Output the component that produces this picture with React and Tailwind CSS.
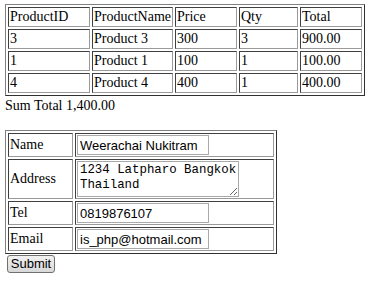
const items = [
  { id: "3", name: "Product 3", price: "300", qty: "3", total: "900.00" },
  { id: "1", name: "Product 1", price: "100", qty: "1", total: "100.00" },
  { id: "4", name: "Product 4", price: "400", qty: "1", total: "400.00" },
];

// classic border="1" look: outset table, inset cells
const table =
  "border-separate border-spacing-[2px] border border-t-[#808080] border-l-[#808080] border-r-[#303030] border-b-[#303030]";
const cell =
  "p-px text-left font-normal align-middle border border-t-[#404040] border-l-[#404040] border-r-[#9a9a9a] border-b-[#9a9a9a]";
const input =
  "block h-[20px] border border-[#a9a9a9] bg-white px-[2px] text-[13px] text-black outline-none font-['Liberation_Sans',Arial,sans-serif]";

export default function App() {
  return (
    <div className="min-h-screen bg-white pl-[5px] pt-[4px] text-[14px] leading-[16px] text-black font-['Liberation_Serif','Times_New_Roman',serif]">
      <table className={`${table} w-[360px]`}>
        <thead>
          <tr>
            <th className={`${cell} h-[20px] w-[82px]`}>ProductID</th>
            <th className={`${cell} h-[20px] w-[80px]`}>ProductName</th>
            <th className={`${cell} h-[20px] w-[62px]`}>Price</th>
            <th className={`${cell} h-[20px] w-[59px]`}>Qty</th>
            <th className={`${cell} h-[20px]`}>Total</th>
          </tr>
        </thead>
        <tbody>
          {items.map((it) => (
            <tr key={it.id}>
              <td className={`${cell} h-[20px]`}>{it.id}</td>
              <td className={`${cell} h-[20px]`}>{it.name}</td>
              <td className={`${cell} h-[20px]`}>{it.price}</td>
              <td className={`${cell} h-[20px]`}>{it.qty}</td>
              <td className={`${cell} h-[20px]`}>{it.total}</td>
            </tr>
          ))}
        </tbody>
      </table>

      <div className="mt-[2px]">Sum Total 1,400.00</div>

      <form className="mt-[16px]" onSubmit={(e) => e.preventDefault()}>
        <table className={`${table} w-[272px]`}>
          <tbody>
            <tr>
              <td className={`${cell} w-[65px]`}>Name</td>
              <td className={cell}>
                <input
                  className={`${input} w-[132px] text-[12px] font-['DejaVu_Sans',Tahoma,sans-serif]`}
                  defaultValue="Weerachai Nukitram"
                />
              </td>
            </tr>
            <tr>
              <td className={cell}>Address</td>
              <td className={cell}>
                <textarea
                  wrap="off"
                  className="block h-[36px] w-[162px] resize overflow-hidden border border-[#a9a9a9] bg-white px-[2px] py-px text-[12.4px] leading-[15px] text-black outline-none font-['Liberation_Mono','Courier_New',monospace]"
                  defaultValue={"1234 Latpharo Bangkok\nThailand"}
                />
              </td>
            </tr>
            <tr>
              <td className={cell}>Tel</td>
              <td className={cell}>
                <input className={`${input} w-[132px]`} defaultValue="0819876107" />
              </td>
            </tr>
            <tr>
              <td className={cell}>Email</td>
              <td className={cell}>
                <input className={`${input} w-[132px]`} defaultValue="is_php@hotmail.com" />
              </td>
            </tr>
          </tbody>
        </table>
        <button
          type="submit"
          className="ml-[2px] mt-px block h-[18px] w-[48px] rounded-[3px] border border-[#707070] bg-gradient-to-b from-[#f2f2f2] to-[#d8d8d8] text-[13px] leading-[14px] text-black font-['Liberation_Sans',Arial,sans-serif]"
        >
          Submit
        </button>
      </form>
    </div>
  );
}
